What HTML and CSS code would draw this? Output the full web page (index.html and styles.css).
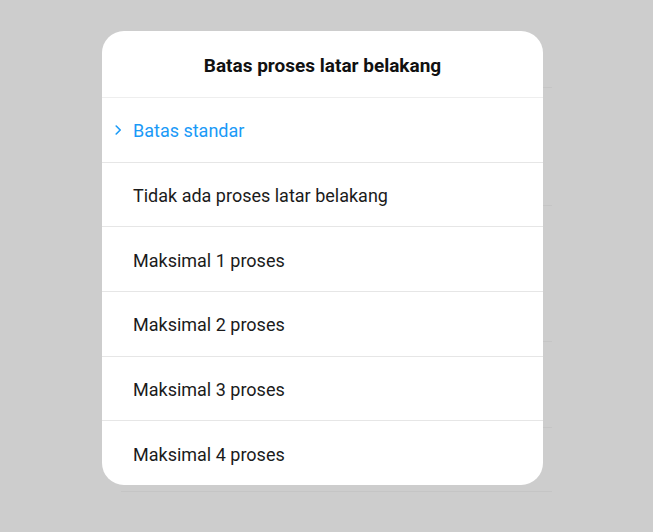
FILE: index.html
```html
<!DOCTYPE html>
<html lang="id">
<head>
<meta charset="utf-8">
<title>Batas proses latar belakang</title>
<link rel="stylesheet" href="styles.css">
</head>
<body>
<div class="backdrop">
  <div class="bg-row r1"></div>
  <div class="bg-row r2"></div>
  <div class="bg-row r3"></div>
  <div class="bg-row r4"></div>
  <div class="bg-row r5"></div>
</div>
<div class="dialog">
  <div class="dialog-title">Batas proses latar belakang</div>
  <ul class="options">
    <li class="option selected">
      <svg class="chev" width="7" height="10" viewBox="0 0 7 10"><path d="M1.2 1 L5.2 5 L1.2 9" fill="none" stroke="#1a9af7" stroke-width="1.6" stroke-linecap="round" stroke-linejoin="round"/></svg>
      <span>Batas standar</span>
    </li>
    <li class="option"><span>Tidak ada proses latar belakang</span></li>
    <li class="option"><span>Maksimal 1 proses</span></li>
    <li class="option"><span>Maksimal 2 proses</span></li>
    <li class="option"><span>Maksimal 3 proses</span></li>
    <li class="option"><span>Maksimal 4 proses</span></li>
  </ul>
</div>
</body>
</html>
```
FILE: styles.css
```css
html, body {
  margin: 0;
  padding: 0;
}
body {
  width: 653px;
  height: 532px;
  background: #cdcdcd;
  font-family: Roboto, "Noto Sans", "Liberation Sans", sans-serif;
  overflow: hidden;
  position: relative;
}
.backdrop {
  display: flex;
  flex-direction: column;
  margin-left: 121px;
  width: 431px;
}
.bg-row {
  border-bottom: 1px solid #c5c5c5;
}
.r1 { height: 87px; }
.r2 { height: 117px; }
.r3 { height: 135px; }
.r4 { height: 85px; }
.r5 { height: 63px; }

.dialog {
  position: absolute;
  left: 102px;
  top: 31px;
  width: 441px;
  height: 454px;
  background: #ffffff;
  border-radius: 22px;
  overflow: hidden;
  display: flex;
  flex-direction: column;
}
.dialog-title {
  height: 67px;
  box-sizing: border-box;
  padding-top: 3px;
  display: flex;
  align-items: center;
  justify-content: center;
  font-size: 19px;
  font-weight: 700;
  color: #111111;
  border-bottom: 1px solid #eeeeee;
}
.options {
  list-style: none;
  margin: 0;
  padding: 0;
  flex: 1;
  display: flex;
  flex-direction: column;
}
.option {
  flex: 1;
  display: flex;
  align-items: center;
  position: relative;
  box-sizing: border-box;
  padding-left: 31px;
  padding-top: 2px;
  font-size: 18px;
  color: #1b1b1b;
  border-top: 1px solid #e6e6e6;
}
.option:first-child {
  border-top: none;
}
.option.selected {
  color: #1a9af7;
}
.chev {
  position: absolute;
  left: 13px;
  top: 50%;
  margin-top: -5px;
}
```
